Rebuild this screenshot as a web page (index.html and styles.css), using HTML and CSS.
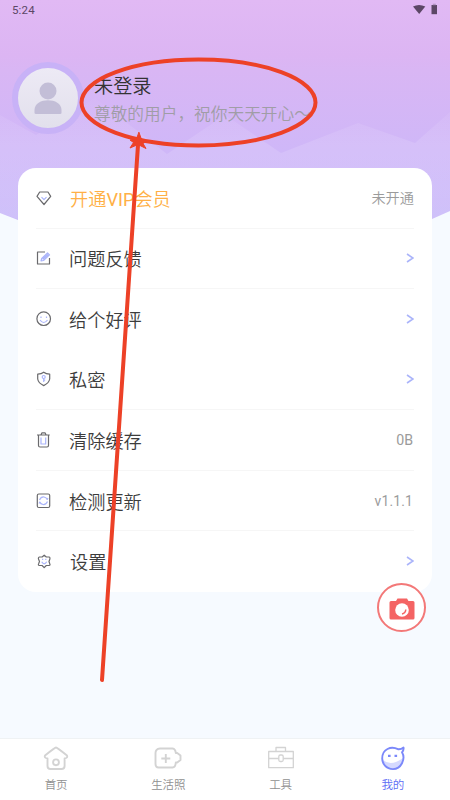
FILE: index.html
```html
<!DOCTYPE html>
<html lang="zh-CN">
<head>
<meta charset="utf-8">
<meta name="viewport" content="width=device-width, initial-scale=1">
<title>我的</title>
<link rel="stylesheet" href="styles.css">
</head>
<body>
<div class="app">
  <svg class="backdrop" viewBox="0 0 450 232" aria-hidden="true">
    <defs>
      <linearGradient id="sky" x1="0" y1="0" x2="0" y2="1">
        <stop offset="0" stop-color="#e1b9f4"/><stop offset=".24" stop-color="#dcb5f3"/><stop offset=".3" stop-color="#d9b6f4"/><stop offset=".65" stop-color="#cfb7f8"/><stop offset="1" stop-color="#cabcfa"/>
      </linearGradient>
      <linearGradient id="hill" x1="0" y1="0" x2="0" y2="1">
        <stop offset="0" stop-color="#fff" stop-opacity=".02"/><stop offset=".4" stop-color="#fff" stop-opacity=".13"/><stop offset="1" stop-color="#fff" stop-opacity=".08"/>
      </linearGradient>
    </defs>
    <path fill="url(#sky)" d="M0 0H450V211L432 219Q225 245 18 220L0 213Z"/>
    <path fill="url(#hill)" d="M0 115L36 135L95 98L167 154L225 115L281 153L358 123L415 143L450 112V211L432 219H18L0 213Z"/>
  </svg>

  <header class="status">
    <span>5:24</span>
    <svg width="27" height="14" viewBox="0 0 27 14" fill="#5c4766"><path d="M1 3.500Q7 .3 13.300 3.500L7.200 11Z"/><path d="M19.500 2H25V11.200H19.500Z"/><path fill="#b394c3" d="M20.800 .7h3v1.500h-3z"/></svg>
  </header>

  <section class="profile">
    <div class="avatar">
      <svg width="28" height="33" viewBox="0 0 28 33" fill="#c3bed7"><circle cx="14" cy="9" r="8.500"/><path d="M.5 31V28C.5 15 27.500 15 27.500 28V31Q27.500 32 26 32H2Q.5 32 .5 31Z"/></svg>
    </div>
    <div class="who">
      <h1>未登录</h1>
      <p>尊敬的用户，祝你天天开心～</p>
    </div>
  </section>

  <main class="card">
    <div class="row vip">
      <svg class="icon" viewBox="0 0 16 16"><path d="M3.700 2H12L14.700 6.400L8 14.500L1 6.400Z"/><path class="accent" d="M5.500 7.200L8 9.700L10.500 7.200"/></svg>
      <span class="label">开通<span class="latin">VIP</span>会员</span><span class="value">未开通</span>
    </div>
    <div class="row">
      <svg class="icon" viewBox="0 0 16 16"><path d="M9 2H1.500V14H13.500V8"/><path class="accent soft" d="M5 11L5.700 8.500L11.500 3L13.500 4.900L7.500 10.500ZM7 9L12 4.500"/></svg>
      <span class="label">问题反馈</span><svg class="arrow" viewBox="0 0 8 10"><path d="M1 1L7 5L1 9"/></svg>
    </div>
    <div class="row joined">
      <svg class="icon" viewBox="0 0 16 16"><circle cx="7.700" cy="7.700" r="6.800"/><path class="accent" d="M5 5.500V7M10.500 5.500V7M4 9Q7.700 14 11.500 9"/></svg>
      <span class="label">给个好评</span><svg class="arrow" viewBox="0 0 8 10"><path d="M1 1L7 5L1 9"/></svg>
    </div>
    <div class="row">
      <svg class="icon" viewBox="0 0 16 16"><path d="M7.700 1.200Q10 3.100 13.700 3.200V8Q13 12 7.700 14.600Q2.300 12 1.700 8V3.200Q5.500 3.100 7.700 1.200Z"/><path class="accent" d="M7.700 7.500V11M7.700 9.200H9.200"/><circle class="accent" cx="7.700" cy="6" r="1.500"/></svg>
      <span class="label">私密</span><svg class="arrow" viewBox="0 0 8 10"><path d="M1 1L7 5L1 9"/></svg>
    </div>
    <div class="row">
      <svg class="icon" viewBox="0 0 16 16"><path d="M1 3H13.700M2.500 3V13.500Q2.500 15 4 15H11Q12.500 15 12.500 13.500V3M5 2.800L6 .8H9L10 2.800"/><path class="accent" d="M5 5.500V12H9.700V5.500"/></svg>
      <span class="label">清除缓存</span><span class="value latin size">0B</span>
    </div>
    <div class="row">
      <svg class="icon" viewBox="0 0 16 16"><rect x="1.300" y="1" width="12.400" height="13.500" rx="1.500"/><path class="accent" d="M3.500 7Q5 3.700 8 4Q10.500 4.500 11.200 6.500L12 5M11.500 8.500Q10 11.900 7 11.500Q4.500 11 3.800 9L3 10.500"/></svg>
      <span class="label">检测更新</span><span class="value latin version">v1.1.1</span>
    </div>
    <div class="row settings">
      <svg class="icon" viewBox="0 0 16 16"><path d="M8.200 2.200L10.300 4L13.300 4Q14.500 4.500 13.800 6.300L13 8.500L13.800 10.700Q14.500 12.300 13 12.500H10.300L8.200 14.700L6.100 12.500H3.400Q1.900 12.300 2.600 10.700L3.500 8.500L2.600 6.300Q1.900 4.500 3.400 4H6.100Z"/><path class="accent" d="M5.700 8.800Q8.200 13 10.700 8.800M6 6.300H7.200M9.200 6.300H10.400"/></svg>
      <span class="label">设置</span><svg class="arrow" viewBox="0 0 8 10"><path d="M1 1L7 5L1 9"/></svg>
    </div>
  </main>

  <nav class="tabs">
    <a class="tab"><svg width="28" height="26" viewBox="0 0 28 26"><path d="M14 2.500Q15 2.500 25 10.500Q26 13 22.600 13.500V21Q22.600 24 19.500 24H8.500Q5.500 24 5.500 21V13.500Q2 13 3 10.500Q13 2.500 14 2.500Z"/><circle cx="14" cy="17.300" r="2.900"/></svg><span>首页</span></a>
    <a class="tab"><svg width="28" height="26" viewBox="0 0 28 26"><path d="M6 3.500H18.500Q21.500 4 21.800 8H23.200L26.500 10.500V15L23.200 17.500H21.800Q21.500 22.500 18.500 22.500H4.500Q1.500 22.500 1.500 19V8Q1.500 4 6 3.500ZM11.800 9V18M7.300 13.500H16.300"/></svg><span>生活照</span></a>
    <a class="tab tools"><svg width="28" height="26" viewBox="0 0 28 26"><path d="M1.700 6.500H26.300V22.700H1.700ZM9 6.500V2.500H18.500V6.500M1.700 13.500H11.800M16.200 13.500H26.300"/><rect x="11.800" y="10" width="4.400" height="6.500" rx="1.500"/></svg><span>工具</span></a>
    <a class="tab active"><svg width="28" height="26" viewBox="0 0 28 26"><path fill="#d5d9ff" stroke="none" d="M4 15Q12 22 24 13Q23 24 14 24Q5 24 4 15Z"/><path d="M19 4.200Q22 4.500 24.500 2.500Q25 5 23 7.300C27 14 22 24.100 14 24.100C7 24.100 3.200 18.500 3.200 13.500C3.200 4 12 .8 19 4.200Z"/><path stroke-width="2.600" d="M10.300 9.700V12M16.800 9.700V12"/></svg><span>我的</span></a>
  </nav>

  <button class="camera" aria-label="拍照">
    <svg width="26" height="22" viewBox="0 0 26 22"><path fill="#f46464" d="M2 3H7L8.500 .5H18L19.500 3H24Q25.500 3 25.500 4.500V20Q25.500 21.500 24 21.500H2Q.5 21.500 .5 20V4.500Q.5 3 2 3Z"/><circle cx="13" cy="12" r="6.800" fill="#fff"/><path d="M16.800 11.500Q16.500 15.300 13 16" fill="none" stroke="#f46464" stroke-width="1.500"/></svg>
  </button>

  <svg class="marker" viewBox="0 0 450 800" aria-hidden="true">
    <ellipse cx="198.500" cy="102.500" rx="117" ry="43"/>
    <path d="M102 680L138 145"/>
    <path class="head" d="M139 132.500L141.500 139.500L147 141L143 143.500L146 148.500L138 144.500L130 148L133.500 142.500L130 140L136 139.500Z"/>
  </svg>
</div>
</body>
</html>
```
FILE: styles.css
```css
* { box-sizing: border-box; }
body { margin: 0; font-family: Roboto, "Noto Sans CJK SC", sans-serif; color: #3c3c3c; }
h1, p { margin: 0; font-weight: 350; }
.app { position: relative; display: flex; flex-direction: column; height: 800px; overflow: hidden; background: #f6faff; }
.backdrop { position: absolute; top: 0; left: 0; width: 450px; height: 232px; }
.status { position: relative; display: flex; justify-content: space-between; height: 20px; padding: 3px 11px 0 12px; font-size: 11.5px; line-height: 15px; letter-spacing: .15px; color: #5c4766; }
.profile { position: relative; display: flex; height: 148px; padding: 42px 0 0 12px; }
.avatar { display: flex; align-items: center; justify-content: center; width: 72px; height: 72px; border: 6px solid #c8b2f7; border-radius: 50%; background: linear-gradient(#edeaf5, #e2e0ec); }
.who { padding: 11px 0 0 10px; white-space: nowrap; }
.who h1 { font-size: 19.2px; line-height: 28px; color: #333; }
.who p { font-size: 16.7px; line-height: 28px; color: #a09da6; }
.card { position: relative; display: grid; grid-template-rows: repeat(7, 1fr); height: 424px; margin: 0 18px; padding: 0 18px; border-radius: 18px; background: #fff; }
.row { display: flex; align-items: center; border-bottom: 1px solid #f6f6f6; }
.row.joined, .row:last-child { border-bottom-color: transparent; }
.icon { width: 16px; height: 16px; margin-right: 17px; fill: none; stroke: #6a6a6d; stroke-width: 1.2; stroke-linejoin: round; }
.icon .accent { stroke: #aab4fa; stroke-width: 1.2; }
.icon .soft { fill: #e3e7ff; }
.label { flex: 1; padding-top: 4px; font-size: 18.2px; line-height: 26px; font-weight: 350; }
.vip .label { color: #ffb046; padding-left: 1px; }
.settings .label { padding-left: 1px; }
.value { font-size: 14.2px; line-height: 20px; color: #9b9b9b; font-weight: 350; }
.latin { font-weight: 400; }
.size { padding-right: 1px; }
.version { font-size: 13.8px; letter-spacing: .2px; padding-right: 1px; }
.arrow { width: 8px; height: 10px; fill: none; stroke: #aab4fa; stroke-width: 1.6; }
.tabs { position: relative; display: grid; grid-template-columns: repeat(4, 1fr); height: 62px; margin-top: auto; padding: 6px 1px 0 0; border-top: 1px solid #eff2f4; background: #fff; }
.tab { display: flex; flex-direction: column; align-items: center; font-size: 11.5px; line-height: 17px; color: #909090; font-weight: 350; }
.tab svg { margin-bottom: 6px; fill: none; stroke: #d3d3d3; stroke-width: 1.9; stroke-linejoin: round; }
.tab.tools svg { stroke-width: 1.3; }
.active { color: #5b6cf5; }
.tab.active svg { stroke: #7b88fa; }
.camera { position: absolute; left: 377px; top: 583px; display: flex; align-items: center; justify-content: center; width: 49px; height: 49px; padding: 2px 0 0 1px; border: 2px solid #f37878; border-radius: 50%; background: #fff; }
.marker { position: absolute; inset: 0; width: 450px; height: 800px; fill: none; stroke: #ed4127; stroke-width: 4; stroke-linecap: round; pointer-events: none; }
.marker .head { fill: #ed4127; stroke-width: 1; }
```
